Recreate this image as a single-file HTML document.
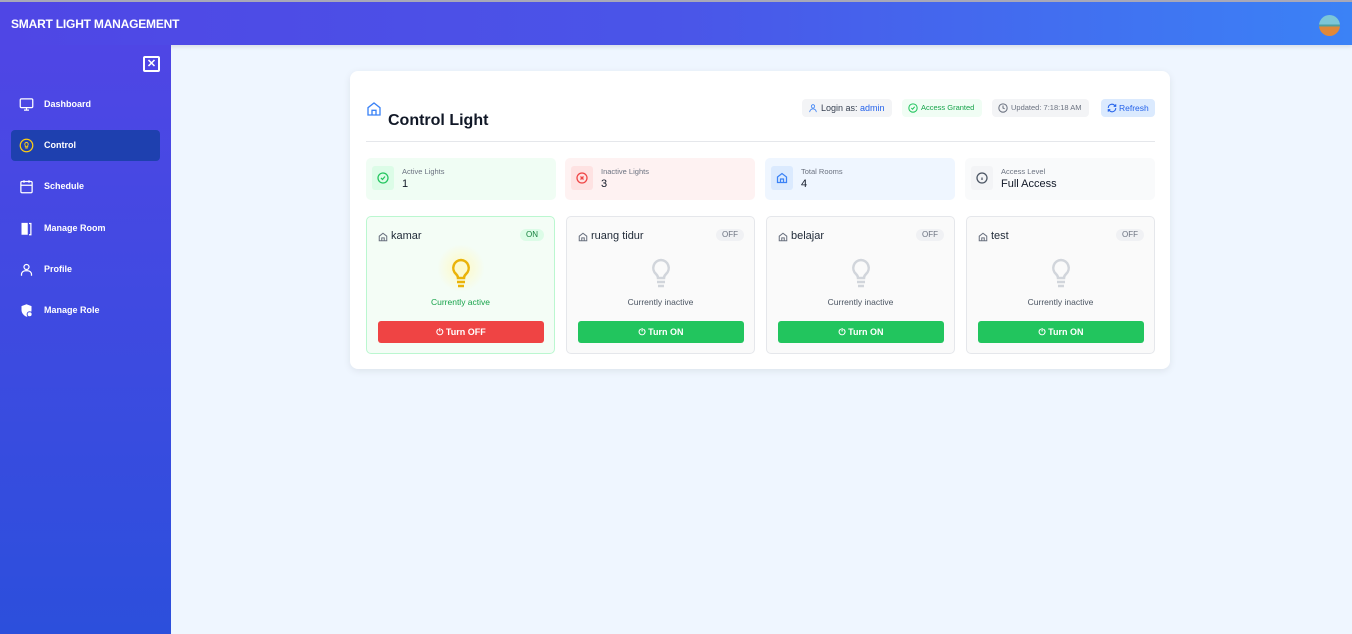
<!DOCTYPE html>
<html><head><meta charset="utf-8"><style>
*{box-sizing:border-box;margin:0;padding:0}
body{width:1352px;height:634px;overflow:hidden;font-family:"Liberation Sans",sans-serif;background:#eff6ff;position:relative}
.hdr{position:absolute;left:0;top:0;width:1352px;height:45px;border-top:2px solid #a8a8b8;background:linear-gradient(90deg,#4f46e5,#4a55e8 50%,#3b82f6);box-shadow:0 2px 4px rgba(0,0,0,.1)}
.hdr .t{position:absolute;left:11px;top:15px;color:#fff;font-weight:bold;font-size:12px;letter-spacing:-.2px}
.av{position:absolute;left:1319px;top:13px;width:21px;height:21px;border-radius:50%;background:linear-gradient(180deg,#7cc6d8 0 45%,#4fa0a0 45% 55%,#e0883a 55%)}
.sb{position:absolute;left:0;top:45px;width:171px;height:589px;background:linear-gradient(180deg,#4f46e5,#2c4fdc)}
.x{position:absolute;left:143px;top:11px;width:17px;height:16px;border:2px solid #fff;border-radius:2px;color:#fff;font-size:11px;font-weight:bold;text-align:center;line-height:12px}
.it{position:absolute;left:11px;width:149px;height:31px;border-radius:4px;color:#fff;font-size:9px;font-weight:bold}
.it span{position:absolute;left:33px;top:10px}
.it svg{position:absolute;left:8px;top:8px}
.it.a{background:#1e40af}
.card{position:absolute;left:350px;top:71px;width:820px;height:298px;background:#fff;border-radius:8px;box-shadow:0 2px 8px rgba(0,0,0,.08)}
h1{position:absolute;left:38px;top:41px;font-size:16px;font-weight:bold;color:#111827}
.hr{position:absolute;left:16px;top:70px;width:789px;height:1px;background:#e5e7eb}
.pill{position:absolute;top:28px;height:18px;border-radius:4px;font-size:9px;line-height:18px;padding-left:19px;white-space:nowrap;overflow:hidden}
.pill svg{position:absolute;left:6px;top:4px}
.st{position:absolute;top:87px;width:190px;height:42px;border-radius:5px}
.st .ic{position:absolute;left:6px;top:8px;width:22px;height:24px;border-radius:3px}
.st .ic svg{position:absolute;left:5px;top:6px}
.st .l{position:absolute;left:36px;top:9px;font-size:7.5px;color:#6b7280}
.st .v{position:absolute;left:36px;top:20px;font-size:11px;color:#111827}
.rm{position:absolute;top:145px;width:189px;height:138px;border:1px solid #e5e7eb;border-radius:5px;background:#fafafa}
.rm .n{position:absolute;left:11px;top:13px;font-size:11px;color:#1f2937;padding-left:13px}
.rm .n svg{position:absolute;left:0;top:2px}
.rm .b{position:absolute;right:10px;top:12px;height:12px;padding:0 6px;border-radius:6px;font-size:8px;line-height:12px;background:#f0f1f4;color:#6b7280}
.rm .bulb{position:absolute;left:83px;top:41px}
.rm .s{position:absolute;left:0;width:100%;top:80px;text-align:center;font-size:8.5px;color:#4b5563}
.rm .btn{position:absolute;left:11px;top:104px;width:166px;height:22px;border-radius:3px;background:#22c55e;color:#fff;font-size:9px;font-weight:bold;text-align:center;line-height:22px}
</style></head><body>
<div class="hdr"><div class="t">SMART LIGHT MANAGEMENT</div><div class="av"></div></div>
<div class="sb">
<div class="x">✕</div>
<div class="it" style="top:44px"><svg width="15" height="15" viewBox="0 0 24 24" fill="none" stroke="#fff" stroke-width="2"><rect x="2" y="3" width="20" height="14" rx="2"/><path d="M8 21h8M12 17v4"/></svg><span>Dashboard</span></div>
<div class="it a" style="top:85px"><svg width="15" height="15" viewBox="0 0 24 24" fill="none" stroke="#facc15" stroke-width="2"><circle cx="12" cy="12" r="10"/><path d="M10 16h4M12 7a3 3 0 0 0-2 5v2h4v-2a3 3 0 0 0-2-5z" stroke-width="1.5"/></svg><span>Control</span></div>
<div class="it" style="top:126px"><svg width="15" height="15" viewBox="0 0 24 24" fill="none" stroke="#fff" stroke-width="2"><rect x="3" y="4" width="18" height="18" rx="2"/><path d="M16 2v4M8 2v4M3 10h18"/></svg><span>Schedule</span></div>
<div class="it" style="top:168px"><svg width="15" height="15" viewBox="0 0 24 24" fill="#fff"><path d="M4 3h10v19H4z"/><path d="M16 4h3v18h-3" fill="none" stroke="#fff" stroke-width="2"/></svg><span>Manage Room</span></div>
<div class="it" style="top:209px"><svg width="15" height="15" viewBox="0 0 24 24" fill="none" stroke="#fff" stroke-width="2"><circle cx="12" cy="8" r="4"/><path d="M4 22v-2a6 6 0 0 1 6-6h4a6 6 0 0 1 6 6v2"/></svg><span>Profile</span></div>
<div class="it" style="top:250px"><svg width="15" height="15" viewBox="0 0 24 24" fill="#fff"><path d="M12 2l8 3v6c0 5-3.5 9-8 11-4.5-2-8-6-8-11V5z"/><circle cx="17" cy="18" r="4" fill="#fff" stroke="#3b48e0" stroke-width="1.5"/></svg><span>Manage Role</span></div>
</div>
<div class="card">
<svg style="position:absolute;left:16px;top:30px" width="16" height="16" viewBox="0 0 24 24" fill="none" stroke="#3b82f6" stroke-width="2"><path d="M3 10l9-7 9 7v11H3z"/><path d="M9 21v-7h6v7"/></svg>
<h1>Control Light</h1>
<div class="pill" style="left:452px;width:90px;background:#f3f4f6;color:#374151"><svg width="10" height="10" viewBox="0 0 24 24" fill="none" stroke="#3b82f6" stroke-width="2"><circle cx="12" cy="8" r="4"/><path d="M4 22a8 8 0 0 1 16 0"/></svg>Login as: <span style="color:#2563eb">admin</span></div>
<div class="pill" style="left:552px;width:80px;background:#f0fdf4;color:#16a34a;font-size:7.5px"><svg width="10" height="10" viewBox="0 0 24 24" fill="none" stroke="#22c55e" stroke-width="2.5"><circle cx="12" cy="12" r="10"/><path d="M8 12l3 3 5-6"/></svg>Access Granted</div>
<div class="pill" style="left:642px;width:97px;background:#f3f4f6;color:#6b7280;font-size:7.5px"><svg width="10" height="10" viewBox="0 0 24 24" fill="none" stroke="#6b7280" stroke-width="2.5"><circle cx="12" cy="12" r="10"/><path d="M12 6v6l4 2"/></svg>Updated: 7:18:18 AM</div>
<div class="pill" style="left:751px;width:54px;background:#dbeafe;color:#2563eb;font-size:8.5px;padding-left:18px"><svg width="10" height="10" viewBox="0 0 24 24" fill="none" stroke="#2563eb" stroke-width="2.5"><path d="M21 12a9 9 0 0 1-15 6.7L3 16M3 12a9 9 0 0 1 15-6.7L21 8M21 3v5h-5M3 21v-5h5"/></svg>Refresh</div>
<div class="hr"></div>
<div class="st" style="left:16px;background:#f0fdf4"><div class="ic" style="background:#dcfce7"><svg width="12" height="12" viewBox="0 0 24 24" fill="none" stroke="#22c55e" stroke-width="2.5"><circle cx="12" cy="12" r="10"/><path d="M8 12l3 3 5-6"/></svg></div><div class="l">Active Lights</div><div class="v">1</div></div>
<div class="st" style="left:215px;background:#fef2f2"><div class="ic" style="background:#fee2e2"><svg width="12" height="12" viewBox="0 0 24 24" fill="none" stroke="#ef4444" stroke-width="2.5"><circle cx="12" cy="12" r="10"/><path d="M9 9l6 6M15 9l-6 6"/></svg></div><div class="l">Inactive Lights</div><div class="v">3</div></div>
<div class="st" style="left:415px;background:#eff6ff"><div class="ic" style="background:#dbeafe"><svg width="12" height="12" viewBox="0 0 24 24" fill="none" stroke="#3b82f6" stroke-width="2.5"><path d="M3 10l9-7 9 7v11H3z"/><path d="M9 21v-7h6v7"/></svg></div><div class="l">Total Rooms</div><div class="v">4</div></div>
<div class="st" style="left:615px;background:#f9fafb;width:190px"><div class="ic" style="background:#f3f4f6"><svg width="12" height="12" viewBox="0 0 24 24" fill="none" stroke="#4b5563" stroke-width="2.5"><circle cx="12" cy="12" r="10"/><path d="M12 16v-5M12 8h0"/></svg></div><div class="l">Access Level</div><div class="v">Full Access</div></div>

<div class="rm" style="left:16px;background:#f4fdf6;border-color:#bbf7d0"><div class="n"><svg width="10" height="10" viewBox="0 0 24 24" fill="none" stroke="#6b7280" stroke-width="2.5"><path d="M3 10l9-7 9 7v11H3z"/><path d="M9 21v-7h6v7"/></svg>kamar</div><div class="b" style="background:#dcfce7;color:#15803d">ON</div>
<div style="position:absolute;left:70px;top:27px;width:48px;height:48px;border-radius:50%;background:radial-gradient(#fef9c3,rgba(254,249,195,0) 70%)"></div>
<svg class="bulb" width="22" height="30" viewBox="0 0 22 30" fill="none" stroke="#eab308" stroke-width="2.5"><path d="M11 2a8 8 0 0 0-5 14c1.5 1.5 2 3 2 4h6c0-1 .5-2.5 2-4a8 8 0 0 0-5-14z"/><path d="M7 24h8M8 28h6"/></svg>
<div class="s" style="color:#16a34a">Currently active</div><div class="btn" style="background:#ef4444">⏻ Turn OFF</div></div>

<div class="rm" style="left:216px"><div class="n"><svg width="10" height="10" viewBox="0 0 24 24" fill="none" stroke="#6b7280" stroke-width="2.5"><path d="M3 10l9-7 9 7v11H3z"/><path d="M9 21v-7h6v7"/></svg>ruang tidur</div><div class="b">OFF</div>
<svg class="bulb" width="22" height="30" viewBox="0 0 22 30" fill="none" stroke="#d1d5db" stroke-width="2.5"><path d="M11 2a8 8 0 0 0-5 14c1.5 1.5 2 3 2 4h6c0-1 .5-2.5 2-4a8 8 0 0 0-5-14z"/><path d="M7 24h8M8 28h6"/></svg>
<div class="s">Currently inactive</div><div class="btn">⏻ Turn ON</div></div>

<div class="rm" style="left:416px"><div class="n"><svg width="10" height="10" viewBox="0 0 24 24" fill="none" stroke="#6b7280" stroke-width="2.5"><path d="M3 10l9-7 9 7v11H3z"/><path d="M9 21v-7h6v7"/></svg>belajar</div><div class="b">OFF</div>
<svg class="bulb" width="22" height="30" viewBox="0 0 22 30" fill="none" stroke="#d1d5db" stroke-width="2.5"><path d="M11 2a8 8 0 0 0-5 14c1.5 1.5 2 3 2 4h6c0-1 .5-2.5 2-4a8 8 0 0 0-5-14z"/><path d="M7 24h8M8 28h6"/></svg>
<div class="s">Currently inactive</div><div class="btn">⏻ Turn ON</div></div>

<div class="rm" style="left:616px"><div class="n"><svg width="10" height="10" viewBox="0 0 24 24" fill="none" stroke="#6b7280" stroke-width="2.5"><path d="M3 10l9-7 9 7v11H3z"/><path d="M9 21v-7h6v7"/></svg>test</div><div class="b">OFF</div>
<svg class="bulb" width="22" height="30" viewBox="0 0 22 30" fill="none" stroke="#d1d5db" stroke-width="2.5"><path d="M11 2a8 8 0 0 0-5 14c1.5 1.5 2 3 2 4h6c0-1 .5-2.5 2-4a8 8 0 0 0-5-14z"/><path d="M7 24h8M8 28h6"/></svg>
<div class="s">Currently inactive</div><div class="btn">⏻ Turn ON</div></div>
</div>
</body></html>
